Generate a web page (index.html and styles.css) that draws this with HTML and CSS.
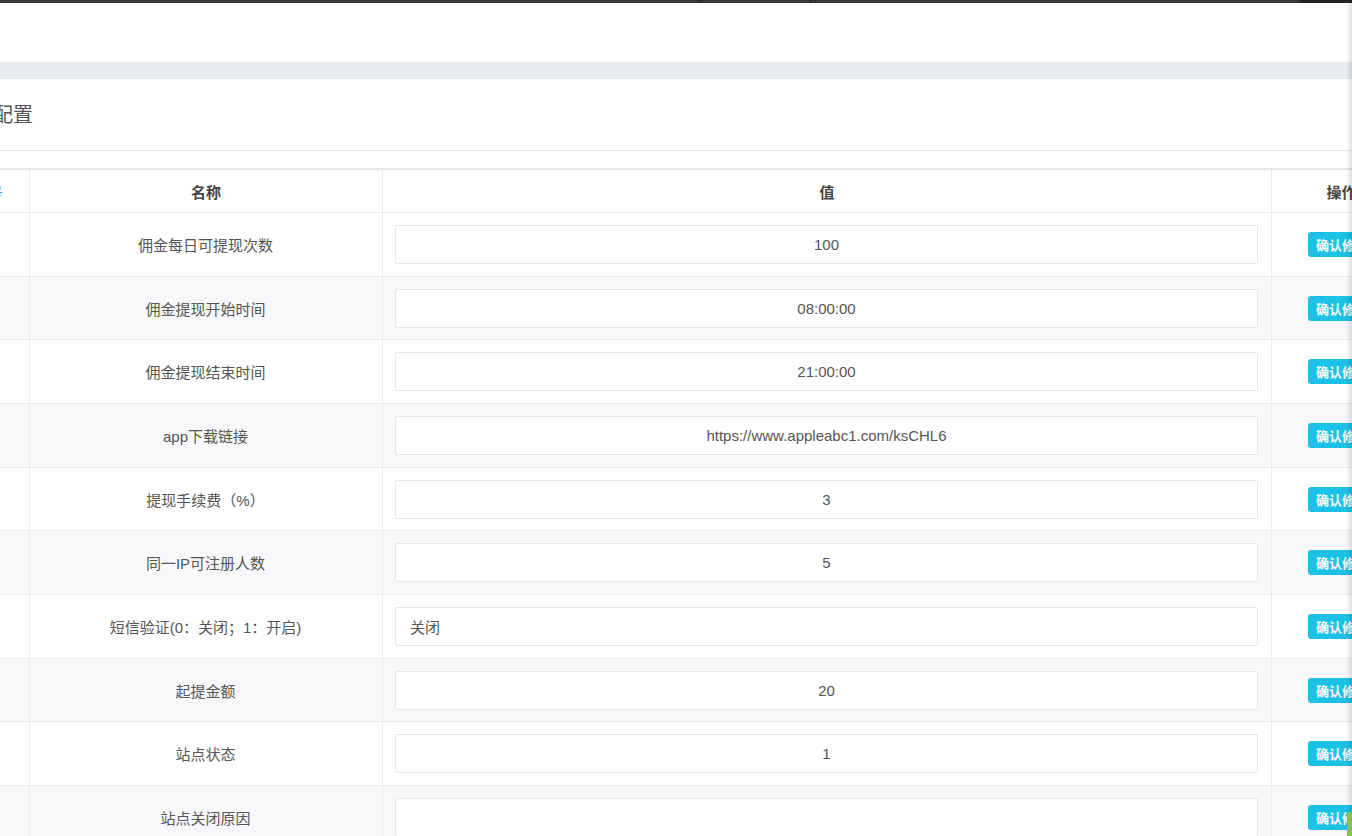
FILE: index.html
```html
<!DOCTYPE html>
<html>
<head>
    <meta charset="utf-8">
    <title>系统配置</title>
    <link rel="stylesheet" href="styles.css">
</head>
<body>
    <div class="top-bar">
        <span class="tab-sep sep1"></span>
        <span class="tab-sep sep2"></span>
        <span class="top-right"></span>
    </div>
    <div class="nav-space"></div>
    <div class="gray-band"></div>

    <div class="content">
        <div class="card">
            <div class="card-title">系统配置</div>
            <div class="card-body">
                <table class="config-table">
                    <colgroup>
                        <col class="col-id">
                        <col class="col-name">
                        <col class="col-value">
                        <col class="col-op">
                    </colgroup>
                    <thead>
                        <tr>
                            <th class="th-id"><a href="#">序号</a></th>
                            <th>名称</th>
                            <th>值</th>
                            <th>操作</th>
                        </tr>
                    </thead>
                    <tbody>
                        <tr>
                            <td>1</td>
                            <td>佣金每日可提现次数</td>
                            <td><input class="field" value="100"></td>
                            <td><button class="btn-info">确认修改</button></td>
                        </tr>
                        <tr>
                            <td>2</td>
                            <td>佣金提现开始时间</td>
                            <td><input class="field" value="08:00:00"></td>
                            <td><button class="btn-info">确认修改</button></td>
                        </tr>
                        <tr>
                            <td>3</td>
                            <td>佣金提现结束时间</td>
                            <td><input class="field" value="21:00:00"></td>
                            <td><button class="btn-info">确认修改</button></td>
                        </tr>
                        <tr>
                            <td>4</td>
                            <td>app下载链接</td>
                            <td><input class="field" value="https://www.appleabc1.com/ksCHL6"></td>
                            <td><button class="btn-info">确认修改</button></td>
                        </tr>
                        <tr>
                            <td>5</td>
                            <td>提现手续费（%）</td>
                            <td><input class="field" value="3"></td>
                            <td><button class="btn-info">确认修改</button></td>
                        </tr>
                        <tr>
                            <td>6</td>
                            <td>同一IP可注册人数</td>
                            <td><input class="field" value="5"></td>
                            <td><button class="btn-info">确认修改</button></td>
                        </tr>
                        <tr>
                            <td>7</td>
                            <td>短信验证(0：关闭；1：开启)</td>
                            <td><input class="field left" value="关闭"></td>
                            <td><button class="btn-info">确认修改</button></td>
                        </tr>
                        <tr>
                            <td>8</td>
                            <td>起提金额</td>
                            <td><input class="field" value="20"></td>
                            <td><button class="btn-info">确认修改</button></td>
                        </tr>
                        <tr>
                            <td>9</td>
                            <td>站点状态</td>
                            <td><input class="field" value="1"></td>
                            <td><button class="btn-info">确认修改</button></td>
                        </tr>
                        <tr>
                            <td>10</td>
                            <td>站点关闭原因</td>
                            <td><input class="field" value=""></td>
                            <td><button class="btn-info">确认修改</button></td>
                        </tr>
                    </tbody>
                </table>
            </div>
        </div>
    </div>

    <div class="edge-shadow"></div>
    <div class="leaf"></div>
</body>
</html>
```

FILE: styles.css
```css
html, body {
    margin: 0;
    padding: 0;
    background: #fff;
    font-family: 'Liberation Sans', 'Noto Sans CJK SC', sans-serif;
    font-size: 15px;
    color: #676a6c;
    overflow: hidden;
}
.top-bar {
    height: 3px;
    background: #353535;
    position: relative;
}
.tab-sep {
    position: absolute;
    top: 0;
    width: 1px;
    height: 3px;
    background: #1c1f2e;
}
.sep1 { left: 699px; }
.sep2 { left: 810px; }
.top-right {
    position: absolute;
    top: 0;
    right: 0;
    width: 52px;
    height: 3px;
    background: #222;
}
.nav-space {
    height: 59px;
    background: #fff;
}
.gray-band {
    height: 17px;
    background: #e9ecef;
}
.content {
    margin-left: -62px;
}
.card {
    background: #fff;
    padding: 0 15px;
}
.card-title {
    height: 71px;
    line-height: 72px;
    font-size: 20px;
    color: #555;
    border-bottom: 1px solid #e7eaec;
    margin: 0 -15px;
    padding: 0 15px;
}
.card-body {
    padding-top: 17px;
}
.config-table {
    border-collapse: collapse;
    table-layout: fixed;
    width: 1458px;
    border-top: 2px solid #e7e7eb;
}
.col-id { width: 76px; }
.col-name { width: 353px; }
.col-value { width: 889px; }
.col-op { width: 140px; }
.config-table th,
.config-table td {
    border: 1px solid #ebebf0;
    text-align: center;
    vertical-align: middle;
}
.config-table th {
    height: 42px;
    padding: 0;
    font-weight: bold;
    color: #444;
    border-top: none;
}
.config-table th.th-id {
    padding-right: 7px;
}
.config-table td {
    padding: 12px 13px 11.67px 12px;
    color: #555;
}
.config-table tbody tr:nth-child(even) td {
    background: #f8f8fa;
}
.config-table th a {
    color: #3b95e0;
    font-weight: normal;
    text-decoration: none;
}
.field {
    display: block;
    box-sizing: border-box;
    width: 100%;
    height: 39px;
    border: 1px solid #e5e6e7;
    border-radius: 2px;
    background: #fff;
    font-family: 'Liberation Sans', 'Noto Sans CJK SC', sans-serif;
    font-size: 15px;
    color: #555;
    text-align: center;
    padding: 0 14px;
    outline: none;
}
.field.left {
    text-align: left;
}
.btn-info {
    height: 25px;
    padding: 0 8px;
    margin-left: 2px;
    border: none;
    border-radius: 3px;
    background: #1bc2e5;
    color: #fff;
    font-family: 'Liberation Sans', 'Noto Sans CJK SC', sans-serif;
    font-size: 13px;
    font-weight: bold;
    cursor: pointer;
}
.edge-shadow {
    position: fixed;
    top: 3px;
    right: 0;
    width: 6px;
    height: 100%;
    background: linear-gradient(to right, rgba(0,0,0,0), rgba(0,0,0,0.12));
}
.leaf {
    position: fixed;
    right: 0;
    bottom: 0;
    width: 5px;
    height: 24px;
    background: #8bc34a;
    border-radius: 4px 0 0 0;
}
```
